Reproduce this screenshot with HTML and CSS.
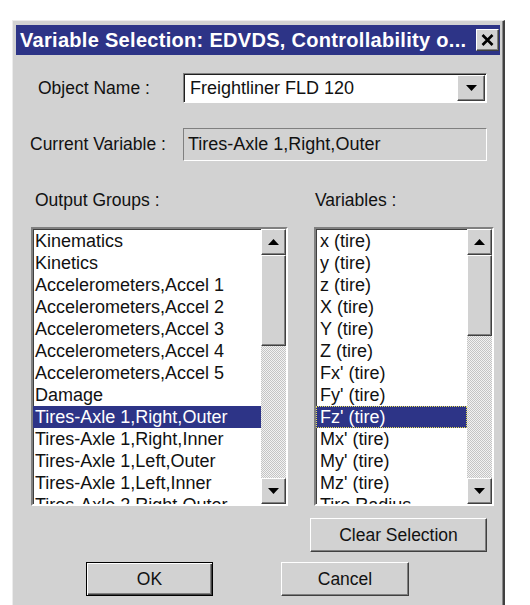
FILE: index.html
```html
<!DOCTYPE html>
<html lang="en">
<head>
  <meta charset="UTF-8" />
  <meta name="viewport" content="width=device-width, initial-scale=1" />
  <title>Variable Selection</title>
  <link rel="stylesheet" href="styles.css">
</head>
<body>
  <div class="dialog">
    <div class="titlebar">
      <span class="title">Variable Selection: EDVDS, Controllability o...</span>
      <button class="close" aria-label="Close">
        <svg width="13" height="12" viewBox="0 0 13 12"><path d="M1.5 1 L11.5 11 M11.5 1 L1.5 11" stroke="#000" stroke-width="2.6" fill="none"/></svg>
      </button>
    </div>

    <div class="content">
      <!-- Objet -->
      <div class="field-row">
        <label class="field-label label-object">Object Name :</label>
        <div class="combo">
          <span class="combo-text">Freightliner FLD 120</span>
          <span class="combo-btn">
            <svg width="11" height="6" viewBox="0 0 11 6"><polygon points="0,0 11,0 5.5,6" fill="#000"/></svg>
          </span>
        </div>
      </div>

      <div class="field-row row-current">
        <label class="field-label label-current">Current Variable :</label>
        <div class="readonly">Tires-Axle 1,Right,Outer</div>
      </div>

      <!-- Listes -->
      <div class="lists">
        <div class="list-col col-groups">
          <div class="list-label">Output Groups :</div>
          <div class="listbox">
            <ul class="items">
              <li>Kinematics</li>
              <li>Kinetics</li>
              <li>Accelerometers,Accel 1</li>
              <li>Accelerometers,Accel 2</li>
              <li>Accelerometers,Accel 3</li>
              <li>Accelerometers,Accel 4</li>
              <li>Accelerometers,Accel 5</li>
              <li>Damage</li>
              <li class="selected">Tires-Axle 1,Right,Outer</li>
              <li>Tires-Axle 1,Right,Inner</li>
              <li>Tires-Axle 1,Left,Outer</li>
              <li>Tires-Axle 1,Left,Inner</li>
              <li>Tires-Axle 2,Right,Outer</li>
            </ul>
            <div class="scrollbar">
              <div class="sb-btn"><svg width="11" height="6" viewBox="0 0 11 6"><polygon points="0,6 11,6 5.5,0" fill="#000"/></svg></div>
              <div class="sb-thumb thumb-groups"></div>
              <div class="sb-track"></div>
              <div class="sb-btn"><svg width="11" height="6" viewBox="0 0 11 6"><polygon points="0,0 11,0 5.5,6" fill="#000"/></svg></div>
            </div>
          </div>
        </div>

        <div class="list-col col-vars">
          <div class="list-label">Variables :</div>
          <div class="listbox">
            <ul class="items">
              <li>x (tire)</li>
              <li>y (tire)</li>
              <li>z (tire)</li>
              <li>X (tire)</li>
              <li>Y (tire)</li>
              <li>Z (tire)</li>
              <li>Fx' (tire)</li>
              <li>Fy' (tire)</li>
              <li class="selected focused">Fz' (tire)</li>
              <li>Mx' (tire)</li>
              <li>My' (tire)</li>
              <li>Mz' (tire)</li>
              <li>Tire Radius</li>
            </ul>
            <div class="scrollbar">
              <div class="sb-btn"><svg width="11" height="6" viewBox="0 0 11 6"><polygon points="0,6 11,6 5.5,0" fill="#000"/></svg></div>
              <div class="sb-thumb thumb-vars"></div>
              <div class="sb-track"></div>
              <div class="sb-btn"><svg width="11" height="6" viewBox="0 0 11 6"><polygon points="0,0 11,0 5.5,6" fill="#000"/></svg></div>
            </div>
          </div>
        </div>
      </div>

      <div class="clear-row">
        <button class="btn btn-clear">Clear Selection</button>
      </div>

      <div class="actions">
        <button class="btn btn-ok">OK</button>
        <button class="btn btn-cancel">Cancel</button>
      </div>
    </div>
  </div>
</body>
</html>
```

FILE: styles.css
```css
/* Base */
*, *::before, *::after {
  margin: 0;
  padding: 0;
  box-sizing: border-box;
}
body {
  background: #fff;
  font-family: 'Liberation Sans', Arial, sans-serif;
  color: #111;
  overflow: hidden;
}
ul {
  list-style: none;
}

/* Fenêtre */
.dialog {
  width: 493px;
  height: 600px;
  margin: 20px 0 0 12px;
  background: #d2d2d2;
  border-top: 1px solid #ececec;
  border-left: 1px solid #ececec;
  border-right: 2px solid #404040;
  box-shadow: inset -1px 0 0 #888;
  padding: 4px 3px 0 3px;
}
.titlebar {
  height: 30px;
  background: #2d3487;
  display: flex;
  align-items: center;
  justify-content: space-between;
  padding: 0 1px 0 4px;
}
.title {
  color: #fff;
  font-weight: bold;
  font-size: 20px;
  letter-spacing: 0.3px;
  white-space: nowrap;
}
.close {
  width: 23px;
  height: 22px;
  background: #d2d2d2;
  border: 1px solid;
  border-color: #fff #404040 #404040 #fff;
  box-shadow: inset -1px -1px 0 #808080;
  display: flex;
  align-items: center;
  justify-content: center;
}

/* Champs */
.content {
  padding-top: 18px;
}
.field-row {
  display: flex;
  align-items: center;
}
.row-current {
  margin-top: 25px;
}
.field-label {
  width: 167px;
  font-size: 17.5px;
}
.label-object {
  padding-left: 22px;
}
.label-current {
  padding-left: 14px;
}
.combo {
  width: 304px;
  height: 30px;
  background: #fff;
  border: 1px solid;
  border-color: #808080 #fff #fff #808080;
  box-shadow: inset 1px 1px 0 #202020;
  padding: 1px;
  display: flex;
}
.combo-text {
  flex: 1;
  font-size: 18px;
  line-height: 26px;
  padding-left: 5px;
}
.combo-btn {
  width: 28px;
  background: #d2d2d2;
  border: 1px solid;
  border-color: #fff #404040 #404040 #fff;
  box-shadow: inset -1px -1px 0 #808080;
  display: flex;
  align-items: center;
  justify-content: center;
}
.readonly {
  width: 304px;
  height: 33px;
  border: 1px solid;
  border-color: #808080 #fff #fff #808080;
  font-size: 18px;
  line-height: 31px;
  padding-left: 4px;
}

/* Listes */
.lists {
  display: flex;
  gap: 26px;
  padding-left: 15px;
  margin-top: 28px;
}
.col-groups {
  width: 257px;
}
.col-vars {
  width: 180px;
}
.list-label {
  font-size: 17.5px;
  line-height: 22px;
  margin-bottom: 16px;
}
.col-groups .list-label {
  padding-left: 4px;
}
.col-vars .list-label {
  padding-left: 1px;
}
.listbox {
  height: 279px;
  display: flex;
  background: #fff;
  border: 2px solid;
  border-color: #808080 #fff #fff #808080;
  box-shadow: inset 1px 1px 0 #404040;
}
.items {
  flex: 1;
  overflow: hidden;
  padding-top: 1px;
  font-size: 18px;
}
.items li {
  height: 22px;
  line-height: 22px;
  white-space: nowrap;
  padding-left: 2px;
}
.col-vars .items li {
  padding-left: 4px;
}
.items .selected {
  background: #2d3487;
  color: #fff;
}
.items .focused {
  outline: 1px dotted #e6df5a;
  outline-offset: -1px;
}

/* Barre de défilement */
.scrollbar {
  width: 25px;
  display: flex;
  flex-direction: column;
}
.sb-btn, .sb-thumb {
  background: #d2d2d2;
  border: 1px solid;
  border-color: #fff #404040 #404040 #fff;
  box-shadow: inset -1px -1px 0 #808080;
}
.sb-btn {
  height: 26px;
  display: flex;
  align-items: center;
  justify-content: center;
}
.thumb-groups {
  height: 91px;
}
.thumb-vars {
  height: 81px;
}
.sb-track {
  flex: 1;
  background: repeating-conic-gradient(#c4c4c4 0 25%, #f2f2f2 0 50%) 0 0 / 2px 2px;
}

/* Boutons */
.btn {
  background: #d2d2d2;
  border: 1px solid;
  border-color: #fff #404040 #404040 #fff;
  box-shadow: inset -1px -1px 0 #808080;
  font-family: 'Liberation Sans', Arial, sans-serif;
  font-size: 17.5px;
  color: #111;
  height: 34px;
}
.clear-row {
  display: flex;
  justify-content: flex-end;
  padding-right: 13px;
  margin-top: 12px;
}
.btn-clear {
  width: 177px;
}
.actions {
  display: flex;
  gap: 68px;
  padding-left: 70px;
  margin-top: 10px;
}
.btn-ok {
  width: 127px;
  border: 1px solid #000;
  box-shadow: inset 1px 1px 0 #fff, inset -1px -1px 0 #404040, inset -2px -2px 0 #808080;
}
.btn-cancel {
  width: 128px;
}
```
